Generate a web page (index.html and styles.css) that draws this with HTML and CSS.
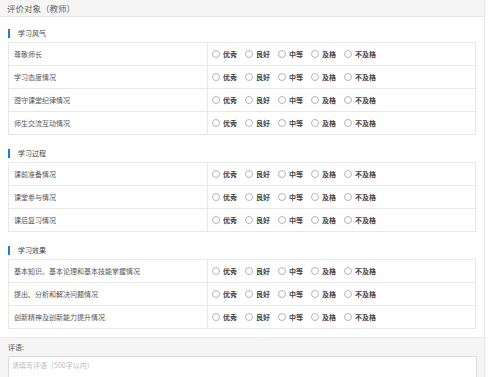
FILE: index.html
```html
<!DOCTYPE html>
<html>
<head>
    <meta charset="UTF-8">
    <link rel="stylesheet" href="styles.css">
</head>
<body>
    <div class="panel">
        <div class="panel-header">评价对象（教师）</div>
        <div class="panel-body" id="sections"></div>
        <div class="panel-footer">
            <div class="footer-label">评语:</div>
            <div class="comment-box">请填写评语（500字以内）</div>
        </div>
    </div>

    <script>
        const sections = [
            { title: "学习风气", items: ["尊敬师长", "学习态度情况", "遵守课堂纪律情况", "师生交流互动情况"] },
            { title: "学习过程", items: ["课前准备情况", "课堂参与情况", "课后复习情况"] },
            { title: "学习效果", items: ["基本知识、基本论理和基本技能掌握情况", "提出、分析和解决问题情况", "创新精神及创新能力提升情况"] }
        ];
        const levels = ["优秀", "良好", "中等", "及格", "不及格"];

        const box = document.getElementById("sections");
        sections.forEach(function(sec) {
            let html = '<div class="section"><div class="section-title">' + sec.title + '</div><div class="rate-table">';
            sec.items.forEach(function(item) {
                html += '<div class="rate-row"><div class="rate-label">' + item + '</div><div class="rate-options">';
                levels.forEach(function(lv) {
                    html += '<label class="option"><span class="radio"></span>' + lv + '</label>';
                });
                html += '</div></div>';
            });
            html += '</div></div>';
            box.insertAdjacentHTML("beforeend", html);
        });
    </script>
</body>
</html>
```

FILE: styles.css
```css
body {
    margin: 0;
    font-family: "Noto Sans CJK SC", "Noto Sans", sans-serif;
    background: #fff;
    color: #555;
}
.panel {
    width: 484px;
    border: 1px solid #e6e6e6;
    border-top: none;
    border-left: none;
    border-radius: 0 3px 0 0;
}
.panel-header {
    height: 16px;
    line-height: 16px;
    padding-left: 7px;
    font-size: 8.5px;
    color: #666;
    background-color: #f5f5f5;
    border-bottom: 1px solid #e6e6e6;
    border-top-right-radius: 3px;
}
.panel-body {
    padding: 12px 0 8px 8px;
}
.section {
    margin-top: 14px;
}
.section:first-child {
    margin-top: 0;
}
.section-title {
    height: 9px;
    line-height: 9px;
    border-left: 2px solid #1e7fd8;
    padding-left: 8px;
    margin-bottom: 4px;
    font-size: 7px;
    color: #444;
}
.rate-table {
    width: 466px;
    border: 1px solid #e8e8e8;
}
.rate-row {
    display: flex;
    height: 22px;
    border-top: 1px solid #e8e8e8;
}
.rate-row:first-child {
    border-top: none;
}
.rate-label {
    width: 193px;
    padding-left: 5px;
    display: flex;
    align-items: center;
    font-size: 7px;
    color: #555;
    border-right: 1px solid #e8e8e8;
}
.rate-options {
    display: flex;
    align-items: center;
    padding-left: 4px;
}
.option {
    display: flex;
    align-items: center;
    margin-right: 8px;
    font-size: 7px;
    font-weight: bold;
    color: #444;
}
.radio {
    width: 6px;
    height: 6px;
    border: 1px solid #b5b5b5;
    border-radius: 50%;
    margin-right: 3px;
    background: #fff;
}
.panel-footer {
    background-color: #f5f5f5;
    border-top: 1px solid #e8e8e8;
    padding: 4px 7px 0 8px;
}
.footer-label {
    font-size: 7px;
    line-height: 10px;
    color: #555;
    margin-bottom: 4px;
}
.comment-box {
    height: 18px;
    background: #fff;
    border: 1px solid #dcdcdc;
    border-bottom: none;
    border-radius: 2px 2px 0 0;
    padding: 3px 3px 0;
    font-size: 7px;
    color: #bbb;
}
```
